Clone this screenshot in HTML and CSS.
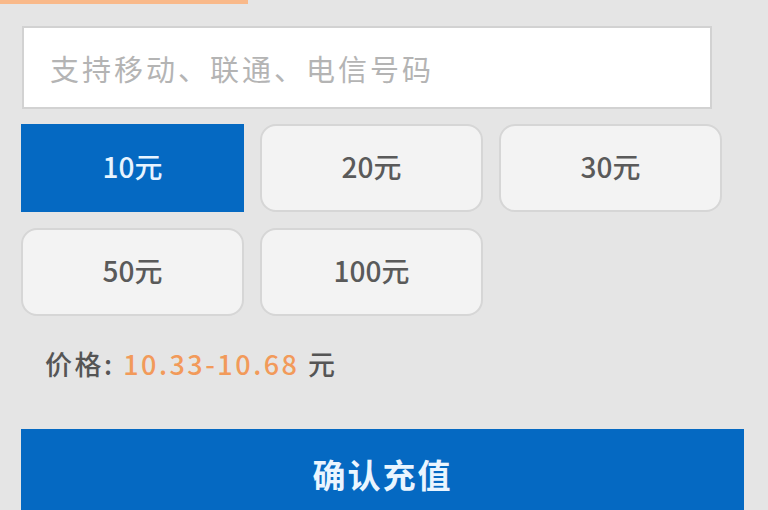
FILE: index.html
```html
<!DOCTYPE html>
<html lang="zh-CN">
  <head>
    <meta charset="UTF-8" />
    <meta name="viewport" content="width=device-width, initial-scale=1.0" />
    <title>话费充值</title>
    <link rel="stylesheet" href="styles.css">
  </head>
  <body>
    <div class="tab-line"></div>
    <div class="recharge">
      <div class="phone-input">支持移动、联通、电信号码</div>
      <div class="amounts">
        <div class="amount active">10元</div>
        <div class="amount">20元</div>
        <div class="amount">30元</div>
        <div class="amount">50元</div>
        <div class="amount">100元</div>
      </div>
      <div class="price">
        价格: <span class="price-num">10.33-10.68</span> 元
      </div>
      <button class="confirm">确认充值</button>
    </div>
  </body>
</html>
```
FILE: styles.css
```css
body {
  margin: 0;
  background-color: #e5e5e5;
  font-family: "Noto Sans CJK SC", "Noto Sans", sans-serif;
  color: #555;
  overflow: hidden;
}

.tab-line {
  width: 248px;
  height: 4px;
  background-color: #f9b98a;
}

.recharge {
  display: flex;
  flex-direction: column;
  padding-left: 21px;
}

.phone-input {
  box-sizing: border-box;
  width: 690px;
  height: 83px;
  margin-top: 22px;
  margin-left: 1px;
  padding-left: 26px;
  display: flex;
  align-items: center;
  background-color: #fff;
  border: 2px solid #d2d2d2;
  font-size: 29px;
  letter-spacing: 3px;
  color: #b4b4b4;
}

.amounts {
  display: grid;
  grid-template-columns: repeat(3, 223px);
  grid-auto-rows: 88px;
  column-gap: 16px;
  row-gap: 16px;
  margin-top: 15px;
}

.amount {
  box-sizing: border-box;
  display: flex;
  align-items: center;
  justify-content: center;
  padding-bottom: 4px;
  background-color: #f3f3f3;
  border: 2px solid #d6d6d6;
  border-radius: 16px;
  font-size: 28px;
  font-weight: 500;
  color: #5a5a5a;
}

.amount.active {
  background-color: #0569c2;
  border-color: #0569c2;
  border-radius: 0;
  color: #e8f4ff;
}

.price {
  margin-top: 28px;
  margin-left: 24px;
  font-size: 27px;
  font-weight: 500;
  letter-spacing: 2.5px;
  color: #555;
}

.price-num {
  color: #f29a5a;
}

.confirm {
  width: 723px;
  height: 90px;
  margin-top: 46px;
  border: none;
  background-color: #0569c2;
  color: #eaf5ff;
  font-family: inherit;
  font-size: 33px;
  font-weight: bold;
  letter-spacing: 2px;
  text-align: center;
}
```
